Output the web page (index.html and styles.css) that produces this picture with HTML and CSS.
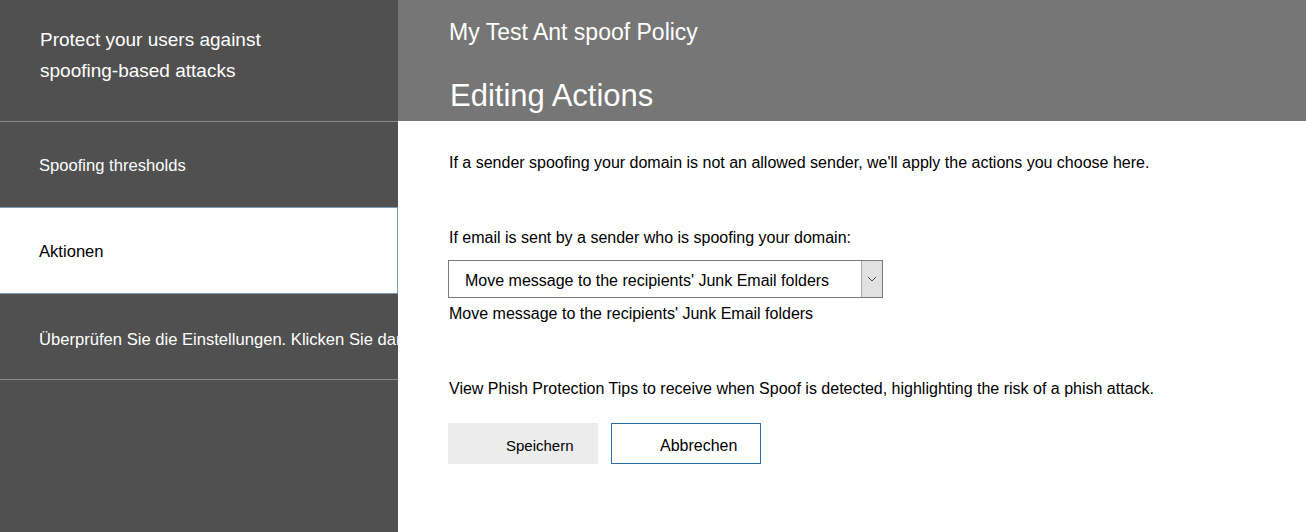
FILE: index.html
```html
<!DOCTYPE html>
<html>
<head>
<meta charset="utf-8">
<link rel="stylesheet" href="styles.css">
</head>
<body>
<div class="app">
  <aside class="sidebar">
    <div class="side-head">
      <p class="side-title">Protect your users against<br>spoofing-based attacks</p>
    </div>
    <div class="side-item">Spoofing thresholds</div>
    <div class="side-item active">Aktionen</div>
    <div class="side-item last">Überprüfen Sie die Einstellungen. Klicken Sie dann auf Speichern.</div>
  </aside>
  <main class="main">
    <header class="main-head">
      <div class="policy">My Test Ant spoof Policy</div>
      <h1 class="heading">Editing Actions</h1>
    </header>
    <section class="content">
      <p class="intro">If a sender spoofing your domain is not an allowed sender, we'll apply the actions you choose here.</p>
      <p class="label">If email is sent by a sender who is spoofing your domain:</p>
      <div class="select">
        <span class="select-text">Move message to the recipients' Junk Email folders</span>
        <span class="select-btn">
          <svg width="10" height="6" viewBox="0 0 10 6"><path d="M1 1 L5 5 L9 1" fill="none" stroke="#444" stroke-width="1"/></svg>
        </span>
      </div>
      <p class="value">Move message to the recipients' Junk Email folders</p>
      <p class="tips">View Phish Protection Tips to receive when Spoof is detected, highlighting the risk of a phish attack.</p>
      <div class="actions">
        <button class="btn save">Speichern</button>
        <button class="btn cancel">Abbrechen</button>
      </div>
    </section>
  </main>
</div>
</body>
</html>
```

FILE: styles.css
```css
* { box-sizing: border-box; }
html, body { margin: 0; padding: 0; height: 100%; }
body { font-family: "Liberation Sans", Arial, sans-serif; background: #fff; overflow: hidden; }
.app { display: flex; height: 532px; }
.sidebar { width: 398px; flex: none; background: #505050; color: #fff; overflow: hidden; }
.side-head { height: 122px; border-bottom: 1px solid #8a8a8a; padding: 24px 0 0 40px; }
.side-title { margin: 0; font-size: 19px; line-height: 31px; }
.side-item { height: 86px; display: flex; align-items: center; padding: 3px 0 0 39px; font-size: 16.6px; white-space: nowrap; border-bottom: 1px solid #6a6a6a; }
.side-item.active { background: #fff; color: #000; border: 1px solid #7f9cb4; border-left: none; height: 87px; margin-top: -1px; }
.side-item.last { border-bottom: 1px solid #8a8a8a; padding-top: 7px; }
.main { flex: 1; display: flex; flex-direction: column; }
.main-head { height: 121px; background: #767676; color: #fff; padding: 18px 0 0 52px; }
.policy { font-size: 23px; line-height: 28px; margin-left: -1px; }
.heading { margin: 31px 0 0 0; font-size: 31px; font-weight: normal; line-height: 38px; }
.content { padding: 31px 0 0 51px; font-size: 16px; color: #000; }
.content p { margin: 0; }
.intro { line-height: 22px; white-space: nowrap; }
.label { margin-top: 53px !important; line-height: 22px; }
.select { margin-top: 11px; margin-left: -1px; width: 435px; height: 38px; border: 1px solid #7a7a7a; display: flex; align-items: center; }
.select-text { flex: 1; padding: 4px 0 0 16px; }
.select-btn { width: 21px; height: 36px; background: #e1e1e1; border-left: 1px solid #adadad; display: flex; align-items: center; justify-content: center; }
.value { line-height: 22px; margin-top: 5px !important; }
.tips { margin-top: 53px !important; line-height: 22px; white-space: nowrap; }
.actions { display: flex; gap: 13px; margin-top: 23px; margin-left: -1px; }
.btn { width: 150px; height: 41px; font-family: "Liberation Sans", Arial, sans-serif; font-size: 15px; color: #000; cursor: pointer; text-align: left; padding: 4px 0 0 0; }
.save { background: #ececec; border: none; padding-left: 58px; }
.cancel { background: #fff; border: 1px solid #2e6da4; font-size: 16px; padding-left: 48px; }
```
